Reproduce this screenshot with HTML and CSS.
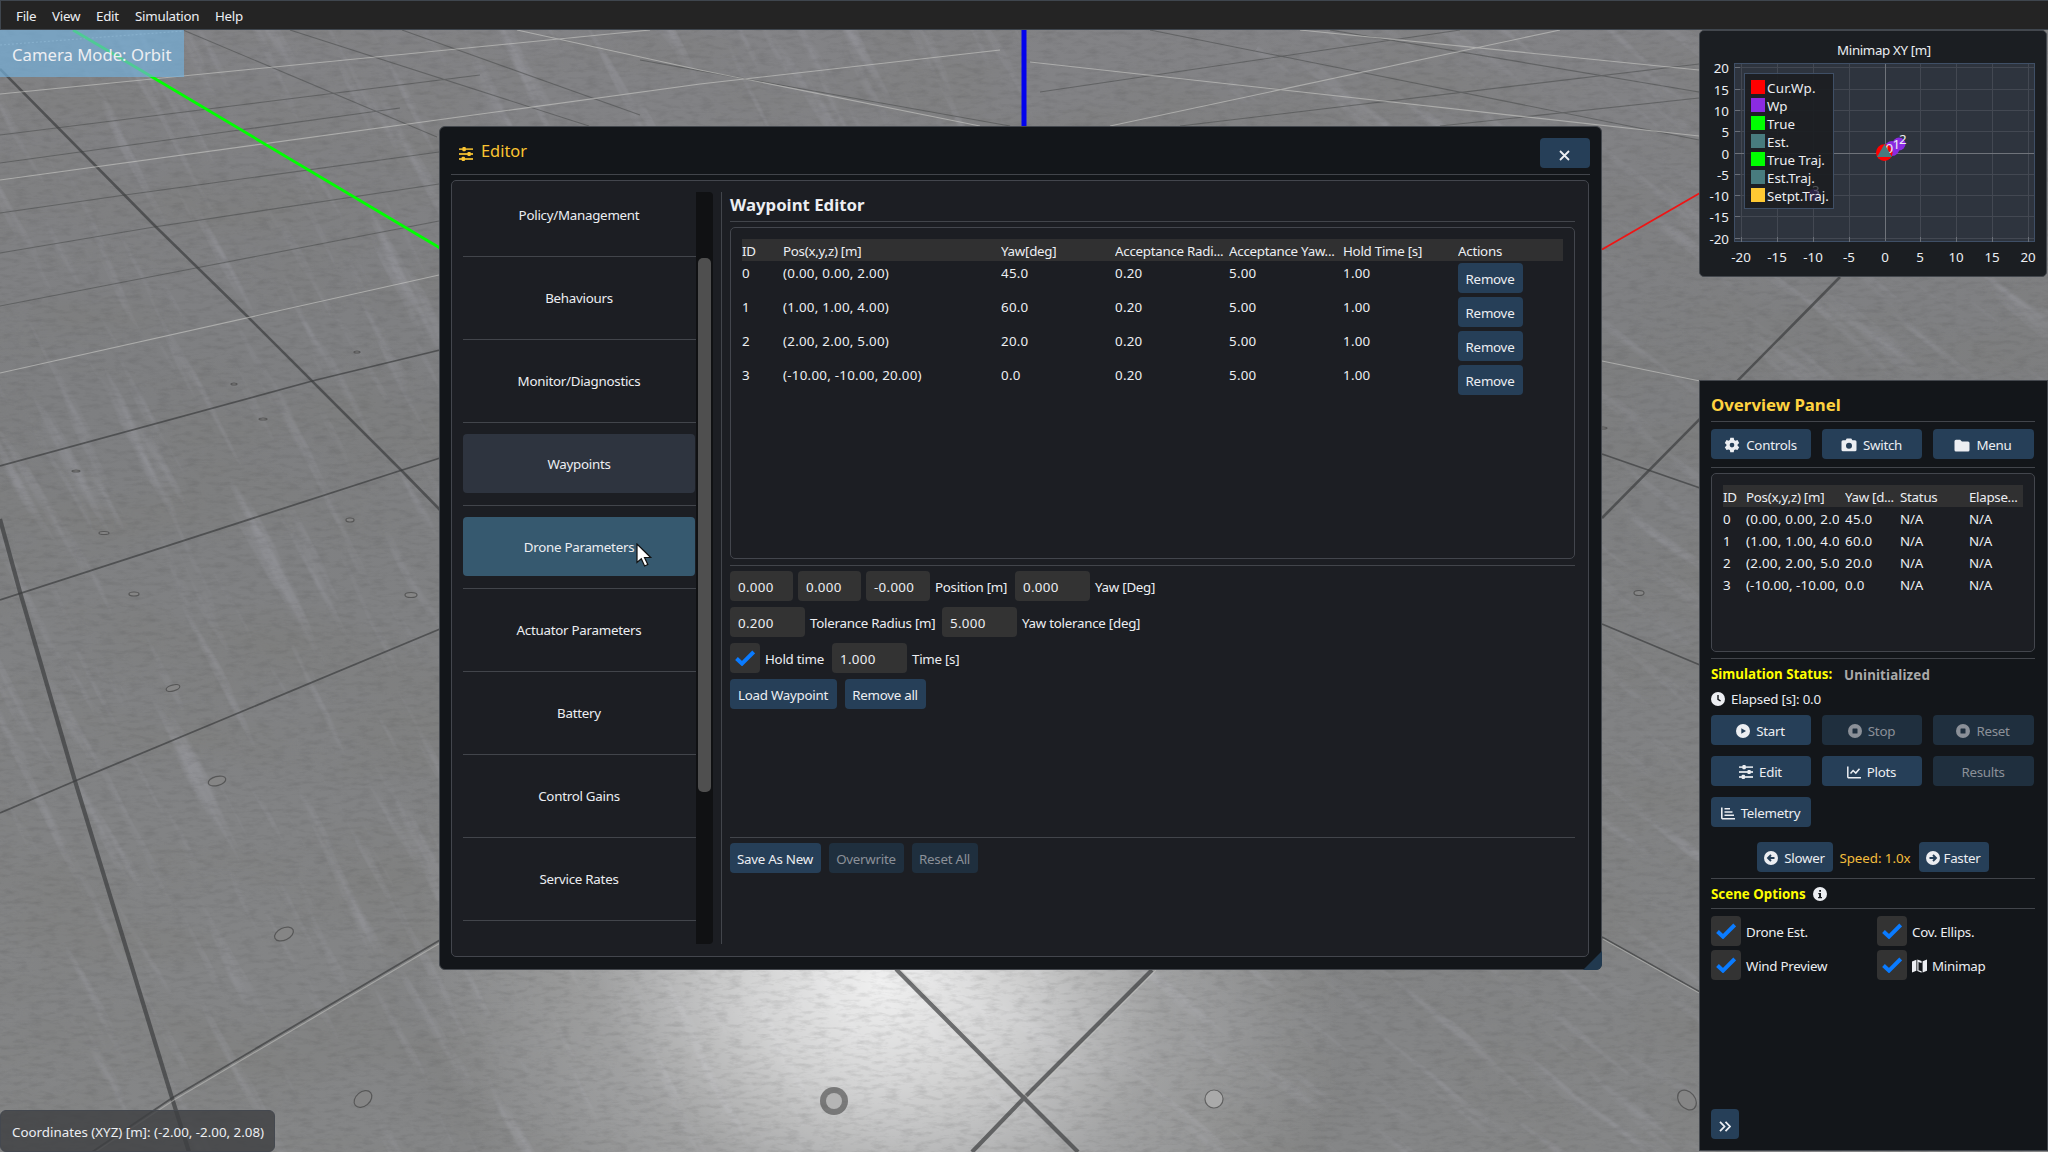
FILE: index.html
```html
<!DOCTYPE html>
<html lang="en">
<head>
<meta charset="utf-8">
<title>Drone Simulator</title>
<link rel="stylesheet" href="styles.css">
</head>
<body>
<svg class="defs" width="0" height="0">
  <symbol id="i-sliders" viewBox="0 0 14 14"><path d="M0 1.2h14v1.9H0zM0 6.1h14v1.9H0zM0 11h14v1.9H0z" fill="currentColor" opacity=".85"/><rect x="3.4" y="0" width="3.4" height="4.2" rx="1" fill="currentColor"/><rect x="8.4" y="4.9" width="3.4" height="4.2" rx="1" fill="currentColor"/><rect x="2.6" y="9.8" width="3.4" height="4.2" rx="1" fill="currentColor"/></symbol>
  <symbol id="i-gear" viewBox="0 0 16 16"><path fill="currentColor" fill-rule="evenodd" d="M6.3.8h3.4l.5 2.2 1.2.7 2.1-.7 1.7 2.9-1.6 1.5v1.3l1.6 1.5-1.7 2.9-2.1-.7-1.2.7-.5 2.2H6.3l-.5-2.2-1.2-.7-2.1.7L.8 10.2l1.6-1.5V7.4L.8 5.9 2.5 3l2.1.7L5.8 3zM8 5.7a2.35 2.35 0 1 0 0 4.7 2.35 2.35 0 0 0 0-4.7z"/></symbol>
  <symbol id="i-camera" viewBox="0 0 16 14"><path fill="currentColor" fill-rule="evenodd" d="M2 2.2h2.6L5.7.5h4.6l1.1 1.7H14a1.5 1.5 0 0 1 1.5 1.5v8a1.5 1.5 0 0 1-1.5 1.5H2a1.5 1.5 0 0 1-1.5-1.5v-8A1.5 1.5 0 0 1 2 2.2zM8 4.7a3 3 0 1 0 0 6 3 3 0 0 0 0-6z"/></symbol>
  <symbol id="i-folder" viewBox="0 0 16 13"><path fill="currentColor" d="M2 .8h4.2l1.7 1.7H14a1.5 1.5 0 0 1 1.5 1.5v7a1.5 1.5 0 0 1-1.5 1.5H2A1.5 1.5 0 0 1 .5 11V2.3A1.5 1.5 0 0 1 2 .8z"/></symbol>
  <symbol id="i-clock" viewBox="0 0 14 14"><circle cx="7" cy="7" r="7" fill="currentColor"/><path d="M7 3v4.3l2.6 1.7" fill="none" stroke="#12161a" stroke-width="1.4"/></symbol>
  <symbol id="i-play" viewBox="0 0 14 14"><circle cx="7" cy="7" r="7" fill="currentColor"/><path d="M5.3 4.2v5.6L10 7z" fill="#263f58"/></symbol>
  <symbol id="i-stop" viewBox="0 0 14 14"><circle cx="7" cy="7" r="7" fill="currentColor"/><rect x="4.5" y="4.5" width="5" height="5" rx=".6" fill="#1f2f3e"/></symbol>
  <symbol id="i-line" viewBox="0 0 14 13"><path d="M.8.5v10.2a1 1 0 0 0 1 1H14M3.5 7.5l2.6-3 2.7 2.6 3.7-4.3" fill="none" stroke="currentColor" stroke-width="1.5"/></symbol>
  <symbol id="i-bars" viewBox="0 0 14 13"><path d="M.8.5v10.2a1 1 0 0 0 1 1H14M3.5 1.8h5.5M3.5 5h8M3.5 8.2h9.5" fill="none" stroke="currentColor" stroke-width="1.6"/></symbol>
  <symbol id="i-left" viewBox="0 0 14 14"><circle cx="7" cy="7" r="7" fill="currentColor"/><path d="M10.5 7H4.5M7 4 4 7l3 3" fill="none" stroke="#263f58" stroke-width="1.9"/></symbol>
  <symbol id="i-right" viewBox="0 0 14 14"><circle cx="7" cy="7" r="7" fill="currentColor"/><path d="M3.5 7h6M7 4l3 3-3 3" fill="none" stroke="#263f58" stroke-width="1.9"/></symbol>
  <symbol id="i-info" viewBox="0 0 14 14"><circle cx="7" cy="7" r="7" fill="currentColor"/><path d="M6.2 3h1.8v1.8H6.2zM5.3 6h2.7v4h1v1.3H5.1V10h1V7.3h-.8z" fill="#12161a"/></symbol>
  <symbol id="i-map" viewBox="0 0 15 14"><path fill="currentColor" d="M0 2.4 4.4.7v11L0 13.5zM5.3.5l4.3 1.6v2L8.5 3.7 6.5 3v8.2l3.1 1v1.5L5.3 12zM10.6 2.2 15 .5v11.2l-4.4 1.8z"/></symbol>
  <symbol id="i-check" viewBox="0 0 20 16"><path d="M1.5 8.500 7 13.600 18.700 2" fill="none" stroke="#0a7bff" stroke-width="4"/></symbol>
</svg>

<svg class="floor" width="2048" height="1152" viewBox="0 0 2048 1152">
  <defs>
    <radialGradient id="spec" cx="0" cy="0" r="1" gradientUnits="userSpaceOnUse" gradientTransform="translate(880 985) rotate(12) scale(470 370)">
      <stop offset="0" stop-color="#fff" stop-opacity=".88"/><stop offset=".28" stop-color="#fff" stop-opacity=".64"/><stop offset=".6" stop-color="#fff" stop-opacity=".24"/><stop offset="1" stop-color="#fff" stop-opacity="0"/>
    </radialGradient>
    <linearGradient id="ground" x1="0" y1="0" x2="0" y2="1"><stop offset="0" stop-color="#838386"/><stop offset=".35" stop-color="#7e7f81"/><stop offset="1" stop-color="#858687"/></linearGradient>
    <filter id="grain" x="0" y="0" width="100%" height="100%"><feTurbulence type="fractalNoise" baseFrequency=".07 .22" numOctaves="4" seed="4"/><feColorMatrix values="0 0 0 0 .05  0 0 0 0 .05  0 0 0 0 .05  1.6 0 0 0 -.72"/></filter>
    <filter id="blotch" x="0" y="0" width="100%" height="100%"><feTurbulence type="fractalNoise" baseFrequency=".006 .013" numOctaves="4" seed="9"/><feColorMatrix values="0 0 0 0 .2  0 0 0 0 .2  0 0 0 0 .19  1.5 0 0 0 -.62"/></filter>
    <filter id="scratch" x="0" y="0" width="100%" height="100%"><feTurbulence type="fractalNoise" baseFrequency=".006 .06" numOctaves="3" seed="21"/><feColorMatrix values="0 0 0 0 .58  0 0 0 0 .58  0 0 0 0 .68  3 0 0 0 -1.75"/></filter>
  </defs>
  <rect width="2048" height="1152" fill="url(#ground)"/>
  <rect width="2048" height="1152" filter="url(#blotch)" opacity=".6"/>
  <g transform="rotate(62 300 600)"><rect x="-500" y="-300" width="1500" height="1300" filter="url(#scratch)" opacity=".24"/></g>
  <g transform="rotate(38 1700 700)"><rect x="950" y="50" width="1500" height="1400" filter="url(#scratch)" opacity=".22"/></g>
  <rect x="350" y="600" width="1100" height="552" fill="url(#spec)"/>
  <rect width="2048" height="1152" filter="url(#grain)" opacity=".2"/>
  <g fill="none" stroke="#3c3d3f" stroke-opacity=".7">
    <path stroke-width="2.6" d="M0 69 156 227 248 317 402 471 440 510M1602 518 1840 277"/>
    <path stroke-width="4.2" d="M0 519 20 592 75 781 172 1098 189 1152M896 969 1024 1098 1078 1152M1152 970 1024 1098 972 1152"/>
    <path stroke-width="1.8" d="M0 466 316 380 440 350M0 600 396 472 440 458M0 813 75 781 440 629M92 1152 172 1098 440 940M1602 454 1700 488M1602 624 1700 665M1602 937 1700 992"/>
    <path stroke-width="1.1" stroke-opacity=".45" d="M0 213 125 195 439 152M0 253 154 227 439 184M0 306 196 268 439 221M0 135 480 75M183 30 437 137M290 30 589 126M402 30 640 115M0 163 400 108M640 60 1010 126M1040 92 1460 30M1180 126 1699 64M1330 30 1699 92M1150 30 1699 140M1440 126 1699 98"/>
  </g>
  <g fill="none" stroke="#c9c9c6" stroke-opacity=".6" stroke-width="1.1">
    <path d="M0 94 650 30M0 180 700 84 1000 50M0 373 439 275M517 30 700 70 980 126M1602 361 1700 381M1110 126 1560 30M1030 62 1699 136M1300 30 1699 70"/>
    <path stroke-dasharray="2 2" d="M0 45 183 31"/>
    <path stroke-opacity=".5" d="M94 1153 174 1100 442 942M900 969 1028 1098M1156 970 1028 1098M1603 939 1701 994"/>
  </g>
  <g fill="#858585" stroke="#3a3a3a" stroke-opacity=".6" stroke-width="1.2">
    <ellipse cx="217" cy="781" rx="9" ry="4.5" transform="rotate(-15 217 781)"/><ellipse cx="284" cy="934" rx="10" ry="6" transform="rotate(-25 284 934)"/><ellipse cx="363" cy="1099" rx="10" ry="7" transform="rotate(-40 363 1099)"/>
    <ellipse cx="173" cy="688" rx="7" ry="3" transform="rotate(-15 173 688)"/><ellipse cx="134" cy="594" rx="5" ry="2"/><ellipse cx="104" cy="533" rx="5" ry="1.5"/><ellipse cx="350" cy="520" rx="4" ry="2"/><ellipse cx="411" cy="595" rx="6" ry="2.5"/><ellipse cx="263" cy="419" rx="4" ry="1"/><ellipse cx="76" cy="471" rx="4" ry="1"/><ellipse cx="234" cy="384" rx="3" ry="1"/><ellipse cx="357" cy="352" rx="3" ry="1"/>
    <ellipse cx="1214" cy="1099" rx="9" ry="9" fill="#aaa"/><ellipse cx="1687" cy="1100" rx="8" ry="11" transform="rotate(-40 1687 1100)"/><ellipse cx="1639" cy="593" rx="5" ry="2.5"/><ellipse cx="1603" cy="428" rx="4" ry="1"/>
  </g>
  <circle cx="834" cy="1101" r="14" fill="#444" opacity=".6"/><circle cx="834" cy="1101" r="8" fill="#b5b5b5"/>
  <g fill="none">
    <path d="M73 30 440 248" stroke="#0f0" stroke-width="2.8"/>
    <path d="M1024 30V126" stroke="#0202ee" stroke-width="5"/>
    <path d="M1602 249.5 1700 193" stroke="#f01414" stroke-width="1.8"/>
  </g>
</svg>

<nav class="menubar"><span>File</span><span>View</span><span>Edit</span><span>Simulation</span><span>Help</span></nav>
<div class="camera">Camera Mode: Orbit</div>
<div class="coords">Coordinates (XYZ) [m]: (-2.00, -2.00, 2.08)</div>

<section class="window editor">
  <header class="titlebar">
    <svg class="icon" width="14" height="14"><use href="#i-sliders"/></svg><span class="title">Editor</span>
    <button class="btn close"><svg width="11" height="11" viewBox="0 0 11 11"><path d="M1 1 10 10M10 1 1 10" stroke="currentColor" stroke-width="1.8"/></svg></button>
  </header>
  <hr>
  <div class="frame editor-body">
    <div class="nav">
      <div class="item">Policy/Management</div><hr>
      <div class="item">Behaviours</div><hr>
      <div class="item">Monitor/Diagnostics</div><hr>
      <div class="item selected">Waypoints</div><hr>
      <div class="item hovered">Drone Parameters</div><hr>
      <div class="item">Actuator Parameters</div><hr>
      <div class="item">Battery</div><hr>
      <div class="item">Control Gains</div><hr>
      <div class="item">Service Rates</div><hr>
    </div>
    <div class="scroll"><div class="thumb"></div></div>
    <div class="vline"></div>
    <div class="content">
      <h2>Waypoint Editor</h2>
      <hr>
      <div class="frame table waypoints">
        <div class="row head"><span>ID</span><span>Pos(x,y,z) [m]</span><span>Yaw[deg]</span><span>Acceptance Radi...</span><span>Acceptance Yaw...</span><span>Hold Time [s]</span><span>Actions</span></div>
        <div class="row"><span>0</span><span>(0.00, 0.00, 2.00)</span><span>45.0</span><span>0.20</span><span>5.00</span><span>1.00</span><button class="btn">Remove</button></div>
        <div class="row"><span>1</span><span>(1.00, 1.00, 4.00)</span><span>60.0</span><span>0.20</span><span>5.00</span><span>1.00</span><button class="btn">Remove</button></div>
        <div class="row"><span>2</span><span>(2.00, 2.00, 5.00)</span><span>20.0</span><span>0.20</span><span>5.00</span><span>1.00</span><button class="btn">Remove</button></div>
        <div class="row"><span>3</span><span>(-10.00, -10.00, 20.00)</span><span>0.0</span><span>0.20</span><span>5.00</span><span>1.00</span><button class="btn">Remove</button></div>
      </div>
      <hr class="after-table">
      <div class="form">
        <div class="line"><span class="input third">0.000</span><span class="input third">0.000</span><span class="input third last">-0.000</span><label class="w72">Position [m]</label><span class="input">0.000</span><label>Yaw [Deg]</label></div>
        <div class="line"><span class="input">0.200</span><label class="w124">Tolerance Radius [m]</label><span class="input">5.000</span><label>Yaw tolerance [deg]</label></div>
        <div class="line"><span class="check"><svg width="20" height="16"><use href="#i-check"/></svg></span><label class="w59">Hold time</label><span class="input">1.000</span><label>Time [s]</label></div>
        <div class="line actions"><button class="btn load">Load Waypoint</button><button class="btn remove-all">Remove all</button></div>
      </div>
      <hr>
      <div class="line actions foot"><button class="btn save">Save As New</button><button class="btn overwrite off">Overwrite</button><button class="btn reset-all off">Reset All</button></div>
    </div>
  </div>
  <div class="grip"></div>
</section>

<section class="window minimap">
  <svg width="346" height="245" viewBox="1700 31 346 245">
    <rect x="1734.5" y="63.5" width="300" height="178" fill="#2e343e" stroke="#3f4f66"/>
    <g stroke="#434852" stroke-width="1"><path d="M1741.5 64V241M1777.5 64V241M1813.5 64V241M1849.5 64V241M1920.5 64V241M1956.5 64V241M1992.5 64V241M2028.5 64V241M1735 67.5H2034M1735 89.5H2034M1735 110.5H2034M1735 131.5H2034M1735 174.5H2034M1735 195.5H2034M1735 216.5H2034M1735 238.5H2034"/></g>
    <path d="M1885.5 64V241M1735 153.5H2034" stroke="#6f737a"/>
    <path stroke="#6a6f78" d="M1741.5 237v5M1777.5 237v5M1813.5 237v5M1849.5 237v5M1920.5 237v5M1956.5 237v5M1992.5 237v5M2028.5 237v5M1735 67.5h5M1735 89.5h5M1735 110.5h5M1735 131.5h5M1735 174.5h5M1735 195.5h5M1735 216.5h5M1735 238.5h5"/>
    <circle cx="1892" cy="148.5" r="7.5" fill="#8a2be2"/><circle cx="1899" cy="144" r="6.5" fill="#8a2be2"/><circle cx="1884.3" cy="152.6" r="8.3" fill="#f00"/>
    <g class="t"><text x="1885.5" y="152.5">0</text><text x="1892.5" y="148.5">1</text><text x="1899" y="144">2</text></g>
    <path d="M1884.5 144 1892 157h-15z" fill="#487b7e"/>
    <rect x="1744.5" y="73.5" width="89" height="135" fill="#1c1e21" fill-opacity=".93" stroke="#3f4f66"/>
    <circle cx="1814" cy="195" r="6" fill="#4b2b86" opacity=".35"/><text class="t" x="1812" y="195" opacity=".25">3</text>
    <path fill="#f00" d="M1751 80h14v14h-14z"/><path fill="#8a2be2" d="M1751 98h14v14h-14z"/><path fill="#0f0" d="M1751 116h14v14h-14zM1751 152h14v14h-14z"/><path fill="#487b7e" d="M1751 134h14v14h-14zM1751 170h14v14h-14z"/><path fill="#ffc933" d="M1751 188h14v14h-14z"/>
    <g class="t"><text class="wide" x="1767" y="93">Cur.Wp.</text><text x="1767" y="111">Wp</text><text x="1767" y="129">True</text><text x="1767" y="147">Est.</text><text x="1767" y="165">True Traj.</text><text x="1767" y="183">Est.Traj.</text><text x="1767" y="201">Setpt.Traj.</text></g>
    <g class="t mid"><text class="map-title" x="1884" y="55">Minimap XY [m]</text><text x="1741" y="262">-20</text><text x="1777" y="262">-15</text><text x="1813" y="262">-10</text><text x="1849" y="262">-5</text><text x="1885" y="262">0</text><text x="1920" y="262">5</text><text x="1956" y="262">10</text><text x="1992" y="262">15</text><text x="2028" y="262">20</text></g>
    <g class="t end"><text x="1729" y="73">20</text><text x="1729" y="95">15</text><text x="1729" y="116">10</text><text x="1729" y="137">5</text><text x="1729" y="159">0</text><text x="1729" y="180">-5</text><text x="1729" y="201">-10</text><text x="1729" y="222">-15</text><text x="1729" y="244">-20</text></g>
  </svg>
</section>

<section class="window overview">
  <h2>Overview Panel</h2>
  <hr>
  <div class="grid3 top">
    <button class="btn"><svg width="16" height="16"><use href="#i-gear"/></svg>Controls</button>
    <button class="btn"><svg width="16" height="14"><use href="#i-camera"/></svg>Switch</button>
    <button class="btn"><svg width="16" height="13"><use href="#i-folder"/></svg>Menu</button>
  </div>
  <hr>
  <div class="frame table mission">
    <div class="row head"><span>ID</span><span>Pos(x,y,z) [m]</span><span>Yaw [d...</span><span>Status</span><span>Elapse...</span></div>
    <div class="row"><span>0</span><span>(0.00, 0.00, 2.0</span><span>45.0</span><span>N/A</span><span>N/A</span></div>
    <div class="row"><span>1</span><span>(1.00, 1.00, 4.0</span><span>60.0</span><span>N/A</span><span>N/A</span></div>
    <div class="row"><span>2</span><span>(2.00, 2.00, 5.0</span><span>20.0</span><span>N/A</span><span>N/A</span></div>
    <div class="row"><span>3</span><span class="tight">(-10.00, -10.00,</span><span>0.0</span><span>N/A</span><span>N/A</span></div>
  </div>
  <hr class="after-table">
  <div class="status"><b class="yellow">Simulation Status:</b><b class="state">Uninitialized</b></div>
  <div class="elapsed"><svg width="14" height="14"><use href="#i-clock"/></svg>Elapsed [s]: 0.0</div>
  <div class="grid3">
    <button class="btn"><svg width="14" height="14"><use href="#i-play"/></svg>Start</button>
    <button class="btn off"><svg width="14" height="14"><use href="#i-stop"/></svg>Stop</button>
    <button class="btn off"><svg width="14" height="14"><use href="#i-stop"/></svg>Reset</button>
    <button class="btn"><svg width="14" height="14"><use href="#i-sliders"/></svg>Edit</button>
    <button class="btn"><svg width="14" height="13"><use href="#i-line"/></svg>Plots</button>
    <button class="btn off">Results</button>
    <button class="btn"><svg width="14" height="13"><use href="#i-bars"/></svg>Telemetry</button>
  </div>
  <div class="speed"><button class="btn slower"><svg width="14" height="14"><use href="#i-left"/></svg>Slower</button><span>Speed: 1.0x</span><button class="btn faster"><svg width="14" height="14"><use href="#i-right"/></svg>Faster</button></div>
  <hr>
  <div class="scene-title"><b class="yellow">Scene Options</b><svg width="14" height="14"><use href="#i-info"/></svg></div>
  <hr>
  <div class="options">
    <label><span class="check"><svg width="20" height="16"><use href="#i-check"/></svg></span><span class="text">Drone Est.</span></label>
    <label><span class="check"><svg width="20" height="16"><use href="#i-check"/></svg></span><span class="text">Cov. Ellips.</span></label>
    <label><span class="check"><svg width="20" height="16"><use href="#i-check"/></svg></span><span class="text">Wind Preview</span></label>
    <label><span class="check"><svg width="20" height="16"><use href="#i-check"/></svg></span><svg class="map" width="15" height="14"><use href="#i-map"/></svg><span class="text">Minimap</span></label>
  </div>
  <button class="btn collapse"><svg width="12" height="11" viewBox="0 0 12 11"><path d="M1 .8 5.5 5.5 1 10.2M6.5.8 11 5.5 6.5 10.2" fill="none" stroke="currentColor" stroke-width="1.8"/></svg></button>
</section>

<svg class="cursor" width="17" height="25" viewBox="0 0 17 25"><path d="M1 1v18.5l4.3-3.8 3.3 7.3 3.2-1.5-3.3-7h6.2z" fill="#fff" stroke="#111" stroke-width="1.2"/></svg>
</body>
</html>
```
FILE: styles.css
```css
* { box-sizing: border-box; }
body {
  margin: 0;
  width: 2048px;
  height: 1152px;
  overflow: hidden;
  position: relative;
  font: 13.33px/20px "Noto Sans", sans-serif;
  letter-spacing: -.26px;
  color: #eceef2;
  background: #7c7d7f;
  white-space: nowrap;
}
.defs { position: absolute; }
.floor { position: absolute; left: 0; top: 0; }
hr { border: 0; margin: 0; height: 1px; background: #42454b; flex: none; }
svg { flex: none; display: block; }
h2 { margin: 0; font-size: 16.8px; line-height: 26px; font-weight: 700; letter-spacing: 0; }
b { letter-spacing: 0; }
button { font: inherit; color: inherit; border: 0; padding: 0; margin: 0; letter-spacing: inherit; }

.menubar {
  position: absolute; left: 0; top: 0;
  width: 2048px; height: 30px;
  display: grid; grid-template-columns: 36px 44px 39px 80px auto; align-items: center;
  padding: 2px 0 0 15px;
  background: #242424;
  border: 1px solid #3f464e;
  border-right: 0;
}
.camera {
  position: absolute; left: 0; top: 30px;
  width: 184px; height: 47px;
  padding: 13px 12px 10px;
  font-size: 16.7px; line-height: 24px; letter-spacing: 0;
  background: rgba(117, 177, 220, .68);
}
.coords {
  position: absolute; left: 0; top: 1110px;
  width: 275px; height: 42px;
  padding: 11px;
  letter-spacing: 0;
  background: rgba(62, 63, 66, .82);
  border: 1px solid #44484f;
  border-radius: 6px;
}

.window {
  position: absolute;
  display: flex; flex-direction: column;
  background: #13161a;
  border: 1px solid #43474d;
}
.frame { background: #1c1e23; border: 1px solid #43464d; border-radius: 5px; }
.btn {
  height: 30px;
  padding: 2px 1px 0 0;
  display: flex; align-items: center; justify-content: center; gap: 6px;
  background: #263f58;
  border-radius: 4px;
}
.btn.off { background: #1f2f3e; color: #8b9098; }

.editor { left: 439px; top: 126px; width: 1163px; height: 844px; padding: 11px; border-radius: 6px; }
.titlebar { height: 36px; display: flex; padding-left: 8px; color: #fbc531; }
.titlebar .icon { margin: 9px 8px 0 0; }
.titlebar .title { font-size: 16.4px; line-height: 24px; letter-spacing: 0; margin-top: 1px; }
.close { margin-left: auto; width: 50px; color: #eceef2; }
.close svg { margin: 2px 1px 0 0; }
.editor-body { margin-top: 5px; width: 1138px; height: 777px; padding: 11px; display: flex; }
.nav { width: 233px; height: 752px; overflow: hidden; }
.nav .item {
  width: 232px; height: 59px; margin: 11px 0 12px;
  display: flex; align-items: center; justify-content: center;
  border-radius: 4px;
}
.nav .item:first-child { margin-top: -7px; }
.nav .selected { background: #2e343f; }
.nav .hovered { background: #36596f; }
.scroll { width: 17px; height: 752px; background: #101113; border-radius: 0 4px 4px 0; padding: 66px 2px 0; }
.thumb { width: 13px; height: 534px; background: #4f4f4f; border-radius: 5px; }
.vline { width: 1px; height: 752px; margin: 0 8px; background: #42454b; }
.content { width: 845px; display: flex; flex-direction: column; }
.content h2 { height: 29px; }

.table { margin-top: 5px; padding: 11px; }
.row { display: grid; letter-spacing: .26px; }
.row.head { height: 22px; padding-top: 2px; background: #303031; letter-spacing: -.26px; }
.row > span { overflow: hidden; }
.waypoints { height: 332px; }
.waypoints .row { grid-template-columns: 41px 218px 114px 114px 114px 115px 65px; width: 821px; height: 34px; padding-top: 2px; }
.waypoints .row.head { height: 22px; grid-template-columns: 41px 218px 114px 114px 114px 115px 100px; }
.waypoints .btn { letter-spacing: -.26px; }
.after-table { margin-top: 6px; }

.form { height: 266px; margin: 5px 0 0; display: flex; flex-direction: column; gap: 6px; }
.line { display: flex; align-items: center; height: 30px; }
.input { width: 75px; height: 30px; padding: 6px 8px 4px; background: #333; border-radius: 4px; letter-spacing: .3px; }
.input.third { width: 63px; margin-right: 5px; }
.input.third.last { width: 64px; margin-right: 0; }
.line label { margin: 0 8px 0 5px; padding-top: 2px; }
.w72 { width: 72px; } .w124 { width: 124px; } .w59 { width: 59px; }
.check { width: 30px; height: 30px; display: flex; align-items: center; justify-content: center; background: #333; border-radius: 4px; }
.actions { gap: 8px; }
.foot { margin-top: 5px; }
.load { width: 107px; } .remove-all { width: 81px; }
.save { width: 91px; } .overwrite { width: 75px; } .reset-all { width: 66px; }
.grip {
  position: absolute; right: -1px; bottom: -1px; width: 19px; height: 19px;
  background: #21394f; clip-path: polygon(100% 0, 100% 100%, 0 100%);
  border-bottom-right-radius: 6px;
}

.minimap { left: 1699px; top: 30px; width: 348px; height: 247px; background: #1b1e22; border-radius: 5px; }
.t { fill: #eceef2; letter-spacing: 0; }
.wide { letter-spacing: .3px; }
.map-title { letter-spacing: -.36px; }
.mid { text-anchor: middle; }
.end { text-anchor: end; }

.overview { left: 1699px; top: 380px; width: 349px; height: 771px; padding: 11px; }
.overview > hr { width: 324px; }
.overview h2 { height: 29px; color: #ffd340; }
.grid3 { display: grid; grid-template-columns: 100px 100px 101px; gap: 11px; }
.grid3.top { margin: 7px 0 8px; }
.mission { width: 324px; height: 179px; }
.mission .row { grid-template-columns: 23px 93px 61px 69px 54px; width: 300px; height: 22px; padding-top: 2px; }
.mission .row span:nth-child(3) { margin-left: 6px; }
.mission .row.head span:nth-child(3), .mission .row.head span:nth-child(5) { letter-spacing: -.3px; }
.mission .row:not(.head) span:nth-child(n+4) { letter-spacing: -.2px; }
.mission .row .tight { letter-spacing: .08px; overflow: visible; }
.yellow { color: #ff0; }
.status { display: flex; margin-top: 5px; height: 22px; }
.status .state { position: absolute; left: 144px; letter-spacing: .15px; padding-top: 1px; color: #a9a9a9; }
.elapsed { display: flex; align-items: center; gap: 6px; height: 20px; margin: 3px 0 6px; letter-spacing: -.2px; }
.speed { display: flex; align-items: center; margin: 15px 0 6px 46px; color: #f3bd3c; }
.speed .btn { color: #eceef2; }
.slower { width: 76px; }
.faster { width: 70px; gap: 3px; }
.speed > span { width: 86px; text-align: center; letter-spacing: -.05px; padding: 1px 2px 0 0; }
.scene-title { display: flex; align-items: center; gap: 7px; height: 29px; padding-top: 1px; }
.options { display: grid; grid-template-columns: 166px 150px; gap: 4px 0; margin-top: 7px; }
.options label { display: flex; align-items: center; gap: 5px; height: 30px; }
.options .text { padding-top: 2px; }
.options .map { margin-top: 2px; }
.collapse { width: 28px; margin-top: 129px; }
.collapse svg { margin-top: 2px; }
.cursor { position: absolute; left: 636px; top: 543px; }
```
